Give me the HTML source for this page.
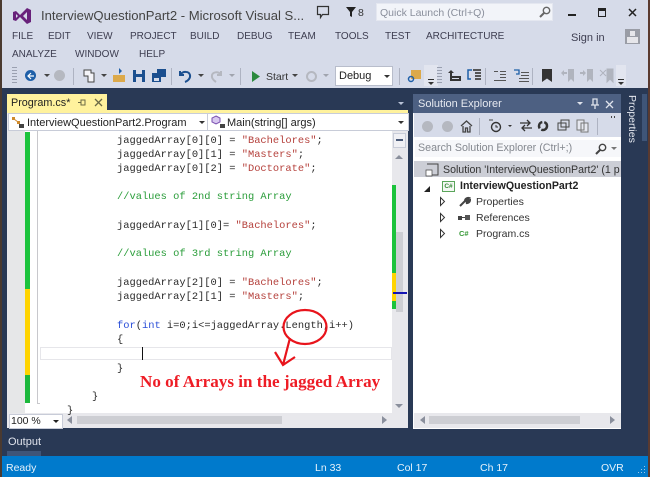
<!DOCTYPE html>
<html><head><meta charset="utf-8"><style>
html,body{margin:0;padding:0}
body{width:650px;height:477px;overflow:hidden;position:relative;background:#d6dbe9;font-family:"Liberation Sans",sans-serif;color:#3d3d50}
.a{position:absolute}
.t{position:absolute;white-space:nowrap;font-size:10.5px;line-height:14px}
.m{position:absolute;white-space:nowrap;font-size:10px;line-height:14px;top:30px}
.c{position:absolute;left:117px;white-space:pre;font:10.4px/14px "Liberation Mono",monospace;color:#2a2a2a}
.g{color:#2a9d3a}.s{color:#b5413c}.b{color:#2b4fd8}
svg{position:absolute;overflow:visible}
</style></head><body>
<div class="a" style="left:0;top:0;width:2px;height:477px;background:#4a3a30"></div>
<div class="a" style="left:648px;top:0;width:2px;height:477px;background:#5a3a30"></div>

<svg style="left:12px;top:7px" width="20" height="18" viewBox="0 0 20 18"><path d="M1 5l3-1 4 4 7-7 4 2v12l-4 2-7-7-4 4-3-1zM4 7v4l2-2zM15 5l-4 4 4 4z" fill="#68217a" fill-rule="evenodd"/></svg>
<div class="t" style="left:41px;top:8px;font-size:13.1px;line-height:16px;color:#444">InterviewQuestionPart2 - Microsoft Visual S...</div>
<svg style="left:316px;top:5px" width="14" height="14"><path d="M1.500 1.500h11v8h-6l-2 3v-3h-3z" fill="none" stroke="#333" stroke-width="1.200"/></svg>
<svg style="left:346px;top:7px" width="11" height="11"><path d="M0 0h10l-4 5v5l-2-1v-4z" fill="#222"/></svg>
<div class="t" style="left:358px;top:6px;color:#333">8</div>
<div class="a" style="left:376px;top:3px;width:175px;height:16px;background:#f2f4f9;border:1px solid #e4e7f0"></div>
<div class="t" style="left:380px;top:6px;color:#8a8f9c">Quick Launch (Ctrl+Q)</div>
<svg style="left:539px;top:6px" width="12" height="12"><circle cx="7.500" cy="4.500" r="3.200" fill="none" stroke="#666" stroke-width="1.400"/><path d="M5 7l-4 4" stroke="#666" stroke-width="2"/></svg>
<div class="a" style="left:568px;top:14px;width:8px;height:2px;background:#222"></div>
<div class="a" style="left:598px;top:8px;width:6px;height:5px;border:1.500px solid #222;border-top-width:3px"></div>
<svg style="left:628px;top:8px" width="10" height="9"><path d="M1 1l7 7M8 1l-7 7" stroke="#222" stroke-width="1.500"/></svg>

<div class="m" style="left:12px">FILE</div>
<div class="m" style="left:48px">EDIT</div>
<div class="m" style="left:87px">VIEW</div>
<div class="m" style="left:130px">PROJECT</div>
<div class="m" style="left:190px">BUILD</div>
<div class="m" style="left:237px">DEBUG</div>
<div class="m" style="left:288px">TEAM</div>
<div class="m" style="left:335px">TOOLS</div>
<div class="m" style="left:385px">TEST</div>
<div class="m" style="left:426px">ARCHITECTURE</div>
<div class="t" style="left:571px;top:31px;font-size:11px">Sign in</div>
<div class="a" style="left:625px;top:29px;width:15px;height:15px;background:#9a9da6"></div>
<div class="a" style="left:630px;top:31px;width:5px;height:5px;background:#e6e6ea"></div>
<div class="a" style="left:627px;top:37px;width:11px;height:6px;background:#e6e6ea"></div>
<div class="m" style="left:12px;top:48px">ANALYZE</div>
<div class="m" style="left:75px;top:48px">WINDOW</div>
<div class="m" style="left:139px;top:48px">HELP</div>

<!-- toolbar -->
<div class="a" style="left:12px;top:67px;width:5px;height:17px;background:repeating-linear-gradient(#9aa0b0 0 1px,#d6dbe9 1px 3px)"></div>
<div class="a" style="left:25px;top:70px;width:11px;height:11px;border-radius:50%;background:#1e5fa8"></div>
<svg style="left:27px;top:72px" width="8" height="8"><path d="M4 1L1 4l3 3M1 4h6" stroke="#fff" stroke-width="1.200" fill="none"/></svg>
<div class="a" style="left:44px;top:74px;border:3px solid transparent;border-top-color:#444"></div>
<div class="a" style="left:54px;top:70px;width:11px;height:11px;border-radius:50%;background:#b5b8c0"></div>
<div class="a" style="left:73px;top:68px;width:1px;height:17px;background:#aeb3c2"></div>
<svg style="left:82px;top:68px" width="14" height="16"><path d="M2 2h7v3h3v9H6V8H2z" fill="#f4f4f8" stroke="#444"/></svg>
<div class="a" style="left:101px;top:74px;border:3px solid transparent;border-top-color:#444"></div>
<svg style="left:112px;top:67px" width="14" height="16"><path d="M1 8h12v7H1z" fill="#dca94a"/><path d="M7 1l3 3-3 3z" fill="#1e5fa8"/></svg>
<svg style="left:133px;top:70px" width="12" height="12"><path d="M0 0h12v12H0z" fill="#1b4f8f"/><path d="M3 0h6v4H3zM3 7h6v5H3z" fill="#d6dbe9"/></svg>
<svg style="left:152px;top:69px" width="14" height="13"><path d="M5 0h9v8H5z" fill="#1b4f8f"/><path d="M0 4h9v9H0z" fill="#1b4f8f"/><path d="M2 9h5v3H2z" fill="#d6dbe9"/></svg>
<div class="a" style="left:171px;top:68px;width:1px;height:17px;background:#aeb3c2"></div>
<svg style="left:178px;top:69px" width="14" height="14"><path d="M2 2v4h4M2.500 5.500C5 2 11 2 12 6c.7 3-2 6-5 7" fill="none" stroke="#1b4f8f" stroke-width="2"/></svg>
<div class="a" style="left:198px;top:74px;border:3px solid transparent;border-top-color:#444"></div>
<svg style="left:210px;top:69px" width="13" height="14"><path d="M11 2v4H7M11 5.500C8 2 3 3 2 6c-.7 3 1 5 4 7" fill="none" stroke="#b5b8c0" stroke-width="2"/></svg>
<div class="a" style="left:229px;top:74px;border:3px solid transparent;border-top-color:#a0a4ae"></div>
<div class="a" style="left:240px;top:68px;width:1px;height:17px;background:#aeb3c2"></div>
<svg style="left:252px;top:71px" width="9" height="11"><path d="M0 0l8 5.500-8 5.500z" fill="#2b8a3e"/></svg>
<div class="t" style="left:266px;top:70px;color:#333">Start</div>
<div class="a" style="left:292px;top:74px;border:3px solid transparent;border-top-color:#444"></div>
<div class="a" style="left:306px;top:71px;width:7px;height:7px;border:2px solid #b5b8c0;border-radius:50%"></div>
<div class="a" style="left:323px;top:74px;border:3px solid transparent;border-top-color:#a0a4ae"></div>
<div class="a" style="left:335px;top:66px;width:56px;height:18px;background:#fff;border:1px solid #b8bdcb"></div>
<div class="t" style="left:339px;top:69px;color:#222;font-size:11px">Debug</div>
<div class="a" style="left:384px;top:75px;border:3px solid transparent;border-top-color:#333"></div>
<div class="a" style="left:399px;top:68px;width:1px;height:17px;background:#aeb3c2"></div>
<svg style="left:407px;top:69px" width="15" height="15"><path d="M4 1h10v9H4z" fill="#dca94a"/><circle cx="4" cy="10" r="2.500" fill="none" stroke="#1e5fa8" stroke-width="1.500"/></svg>
<div class="a" style="left:424px;top:65px;width:14px;height:21px;background:#e2e5ef"></div>
<div class="a" style="left:428px;top:79px;width:6px;height:1px;background:#333"></div>
<div class="a" style="left:428px;top:82px;border:3px solid transparent;border-top-color:#333"></div>
<div class="a" style="left:437px;top:67px;width:5px;height:17px;background:repeating-linear-gradient(#9aa0b0 0 1px,#d6dbe9 1px 3px)"></div>
<svg style="left:448px;top:70px" width="14" height="12"><path d="M3 0l3 3H4v3h9v5H2V3H0z" fill="#333"/><path d="M4 8h7v1H4z" fill="#d6dbe9"/></svg>
<svg style="left:467px;top:69px" width="15" height="13"><path d="M5 1H1v9h3" fill="none" stroke="#1e5fa8" stroke-width="1.500"/><path d="M6 0h8v2H6zM8 3h6v2H8zM8 6h6v2H8zM8 9h6v2H8z" fill="#555"/></svg>
<div class="a" style="left:485px;top:68px;width:1px;height:17px;background:#aeb3c2"></div>
<svg style="left:494px;top:71px" width="12" height="10"><path d="M0 0h4v1H0zM6 0h6v1H6zM6 3h6v1H6zM6 6h6v1H6zM0 9h12v1H0z" fill="#555"/></svg>
<svg style="left:514px;top:70px" width="15" height="12"><path d="M0 0h5v4H2" fill="none" stroke="#1e5fa8" stroke-width="1.300"/><path d="M7 2h8v1H7zM7 5h8v1H7zM5 8h10v1H5zM5 11h10v1H5z" fill="#555"/></svg>
<div class="a" style="left:532px;top:68px;width:1px;height:17px;background:#aeb3c2"></div>
<svg style="left:542px;top:69px" width="10" height="13"><path d="M0 0h10v13L5 9.500 0 13z" fill="#333"/></svg>
<svg style="left:561px;top:69px" width="14" height="13"><path d="M7 0h6v13l-3-3-3 3zM0 4l3-3v2h3v2H3v2z" fill="#b0b4be"/></svg>
<svg style="left:580px;top:69px" width="14" height="13"><path d="M7 0h6v13l-3-3-3 3zM6 4L3 1v2H0v2h3v2z" fill="#b0b4be"/></svg>
<svg style="left:600px;top:69px" width="14" height="13"><path d="M7 0h6v13l-3-3-3 3zM0 1l6 6M6 1L0 7" fill="#b0b4be" stroke="#b0b4be"/></svg>
<div class="a" style="left:616px;top:65px;width:10px;height:21px;background:#e2e5ef"></div>
<div class="a" style="left:618px;top:79px;width:6px;height:1px;background:#333"></div>
<div class="a" style="left:618px;top:82px;border:3px solid transparent;border-top-color:#333"></div>

<!-- dark body -->
<div class="a" style="left:2px;top:88px;width:646px;height:369px;background:#293955"></div>
<div class="a" style="left:7px;top:94px;width:100px;height:17px;background:#fff29d"></div>
<div class="a" style="left:7px;top:110px;width:401px;height:3px;background:#fff29d"></div>
<div class="t" style="left:11px;top:96px;font-size:10.800px;color:#222">Program.cs*</div>
<svg style="left:78px;top:99px" width="9" height="7"><path d="M0 3.500h3M3 1h4v5H3z" fill="none" stroke="#6b6a45"/></svg>
<svg style="left:94px;top:98px" width="9" height="9"><path d="M1 1l7 7M8 1l-7 7" stroke="#6b6a45" stroke-width="1.300"/></svg>
<div class="a" style="left:398px;top:102px;border:3.500px solid transparent;border-top-color:#b8c2d6"></div>

<!-- editor -->
<div class="a" style="left:7px;top:113px;width:401px;height:315px;background:#e8e8ec"></div>
<div class="a" style="left:8px;top:113px;width:198px;height:16px;background:#fff;border:1px solid #c8ccd8"></div>
<div class="a" style="left:207px;top:113px;width:200px;height:16px;background:#fff;border:1px solid #c8ccd8"></div>
<svg style="left:11px;top:115px" width="14" height="14"><path d="M1 2h3v3H1zM6 6h3v3H6z" fill="#d08a2c"/><path d="M3 4l4 3" stroke="#d08a2c"/><rect x="8" y="9" width="5" height="4" fill="#444"/></svg>
<div class="t" style="left:27px;top:116px;font-size:11px;color:#222">InterviewQuestionPart2.Program</div>
<div class="a" style="left:199px;top:121px;border:3px solid transparent;border-top-color:#333"></div>
<svg style="left:211px;top:115px" width="15" height="14"><path d="M5 1l4 2v4l-4 2-4-2V3z" fill="#d8c8f0" stroke="#7a4fb0"/><rect x="9" y="9" width="5" height="4" fill="#444"/></svg>
<div class="t" style="left:227px;top:116px;font-size:11px;color:#222">Main(string[] args)</div>
<div class="a" style="left:398px;top:121px;border:3px solid transparent;border-top-color:#333"></div>

<div class="a" style="left:23px;top:131px;width:369px;height:282px;background:#fff"></div>
<div class="a" style="left:8px;top:131px;width:17px;height:282px;background:#e6e7e8"></div>
<div class="a" style="left:25px;top:132px;width:5px;height:157px;background:#1cc33c"></div>
<div class="a" style="left:25px;top:289px;width:5px;height:86px;background:#ffd400"></div>
<div class="a" style="left:25px;top:375px;width:5px;height:28px;background:#1cb83c"></div>
<div class="a" style="left:37px;top:131px;width:1px;height:272px;background:#c8c8cc"></div>
<div class="a" style="left:37px;top:403px;width:3px;height:1px;background:#c8c8cc"></div>
<div class="a" style="left:40px;top:347px;width:350px;height:11px;border:1px solid #e6e6ea;background:#fff"></div>
<div class="a" style="left:142px;top:347px;width:1px;height:13px;background:#111"></div>

<div class="c" style="top:134px">jaggedArray[0][0] = <span class="s">"Bachelores"</span>;</div>
<div class="c" style="top:148px">jaggedArray[0][1] = <span class="s">"Masters"</span>;</div>
<div class="c" style="top:162px">jaggedArray[0][2] = <span class="s">"Doctorate"</span>;</div>
<div class="c g" style="top:190px">//values of 2nd string Array</div>
<div class="c" style="top:219px">jaggedArray[1][0]= <span class="s">"Bachelores"</span>;</div>
<div class="c g" style="top:247px">//values of 3rd string Array</div>
<div class="c" style="top:276px">jaggedArray[2][0] = <span class="s">"Bachelores"</span>;</div>
<div class="c" style="top:290px">jaggedArray[2][1] = <span class="s">"Masters"</span>;</div>
<div class="c" style="top:319px"><span class="b">for</span>(<span class="b">int</span> i=0;i&lt;=jaggedArray.Length;i++)</div>
<div class="c" style="top:333px">{</div>
<div class="c" style="top:362px">}</div>
<div class="c" style="top:390px;left:92px">}</div>
<div class="c" style="top:404px;left:67px">}</div>

<svg style="left:270px;top:305px" width="70" height="70" fill="none" stroke="#e8141c" stroke-width="2.200"><ellipse cx="35" cy="22" rx="21.500" ry="17"/><path d="M20 33L13 60M5 47l8 13 12-8"/></svg>
<div class="t" style="left:140px;top:373px;font:bold 17.100px/18px 'Liberation Serif',serif;color:#ee1c25">No of Arrays in the jagged Array</div>

<!-- editor scrollbar -->
<div class="a" style="left:392px;top:131px;width:15px;height:282px;background:#e8e8ec"></div>
<div class="a" style="left:393px;top:133px;width:13px;height:15px;background:#f0f0f4;border:1px solid #c8ccd8;box-sizing:border-box"></div>
<div class="a" style="left:396px;top:139px;width:7px;height:2px;background:#4a5a78"></div>
<div class="a" style="left:395px;top:151px;border:4px solid transparent;border-bottom-color:#8a8f9c"></div>
<div class="a" style="left:395px;top:404px;border:4px solid transparent;border-top-color:#8a8f9c"></div>
<div class="a" style="left:396px;top:232px;width:7px;height:80px;background:#cdced3"></div>
<div class="a" style="left:392px;top:185px;width:4px;height:124px;background:#1cc33c"></div>
<div class="a" style="left:392px;top:273px;width:4px;height:28px;background:#ffd400"></div>
<div class="a" style="left:393px;top:292px;width:14px;height:2px;background:#1414b4"></div>

<div class="a" style="left:9px;top:414px;width:52px;height:13px;background:#fff;border:1px solid #c8ccd8"></div>
<div class="t" style="left:11px;top:414px;color:#222">100 %</div>
<div class="a" style="left:53px;top:420px;border:3px solid transparent;border-top-color:#222"></div>
<div class="a" style="left:67px;top:416px;border:4px solid transparent;border-left:0;border-right:5px solid #8a8f9c"></div>
<div class="a" style="left:77px;top:416px;width:205px;height:8px;background:#cdced3"></div>
<div class="a" style="left:382px;top:416px;border:4px solid transparent;border-right:0;border-left:5px solid #8a8f9c"></div>

<!-- solution explorer -->
<div class="a" style="left:413px;top:94px;width:208px;height:335px;background:#fff"></div>
<div class="a" style="left:413px;top:94px;width:208px;height:19px;background:#4d6082"></div>
<div class="t" style="left:418px;top:97px;font-size:11px;color:#e6e9f0">Solution Explorer</div>
<div class="a" style="left:577px;top:102px;border:3.500px solid transparent;border-top-color:#dfe3ec"></div>
<svg style="left:591px;top:98px" width="9" height="12"><path d="M2 1h4v6H2zM0 7h8M4 7v4" fill="none" stroke="#dfe3ec" stroke-width="1.300"/></svg>
<svg style="left:605px;top:100px" width="9" height="9"><path d="M1 1l7 7M8 1l-7 7" stroke="#dfe3ec" stroke-width="1.300"/></svg>
<div class="a" style="left:414px;top:113px;width:207px;height:24px;background:#d6dbe9"></div>
<div class="a" style="left:422px;top:121px;width:11px;height:11px;border-radius:50%;background:#b5b8c0"></div>
<div class="a" style="left:442px;top:121px;width:11px;height:11px;border-radius:50%;background:#b5b8c0"></div>
<svg style="left:460px;top:120px" width="13" height="13"><path d="M1 6l5.500-5L12 6M3 6v6h2.500V8h2v4H10V6" fill="none" stroke="#444" stroke-width="1.300"/></svg>
<div class="a" style="left:479px;top:118px;width:1px;height:17px;background:#aeb3c2"></div>
<svg style="left:489px;top:119px" width="13" height="14"><path d="M0 1h4" stroke="#444"/><circle cx="7" cy="8" r="4.500" fill="none" stroke="#333" stroke-width="1.400"/><path d="M7 6v2h2" stroke="#333" fill="none"/></svg>
<div class="a" style="left:508px;top:125px;border:2.500px solid transparent;border-top-color:#333"></div>
<svg style="left:520px;top:120px" width="12" height="11"><path d="M0 3h9M7 0l3 3-3 3M12 8H3M5 5L2 8l3 3" fill="none" stroke="#333" stroke-width="1.300"/></svg>
<svg style="left:537px;top:120px" width="12" height="12"><circle cx="6" cy="6" r="4" fill="none" stroke="#333" stroke-width="2.500" stroke-dasharray="8 2"/></svg>
<svg style="left:558px;top:119px" width="12" height="12"><path d="M3 1h8v7H3zM0 4h8v7H0z" fill="#d6dbe9" stroke="#444"/></svg>
<svg style="left:577px;top:119px" width="12" height="14"><path d="M0 1h7v10H0zM4 4h7v9H4z" fill="#e6e8f0" stroke="#777"/></svg>
<div class="a" style="left:597px;top:118px;width:1px;height:17px;background:#aeb3c2"></div>
<div class="a" style="left:611px;top:116px;width:1px;height:2px;background:#444;box-shadow:3px 0 #444"></div>
<div class="a" style="left:415px;top:140px;width:206px;height:17px;background:#f6f7fa"></div>
<div class="t" style="left:418px;top:141px;color:#84888f;font-size:10.700px">Search Solution Explorer (Ctrl+;)</div>
<svg style="left:595px;top:143px" width="12" height="12"><circle cx="7.500" cy="4.500" r="3.200" fill="none" stroke="#444" stroke-width="1.400"/><path d="M5 7l-4 4" stroke="#444" stroke-width="2"/></svg>
<div class="a" style="left:611px;top:147px;border:3px solid transparent;border-top-color:#777"></div>
<div class="a" style="left:414px;top:161px;width:207px;height:16px;background:#ccced6"></div>
<svg style="left:425px;top:163px" width="14" height="14"><path d="M2 1h11v11H5" fill="none" stroke="#444"/><path d="M1 7h6v6H1z" fill="#fff" stroke="#444" stroke-width=".7"/></svg>
<div class="a" style="left:443px;top:163px;width:178px;height:14px;overflow:hidden"><div class="t" style="left:0;top:0;color:#333;font-size:10.600px">Solution 'InterviewQuestionPart2' (1 p</div></div>
<div class="a" style="left:424px;top:186px;width:0;height:0;border-bottom:6px solid #222;border-left:6px solid transparent"></div>
<div class="a" style="left:442px;top:181px;width:11px;height:9px;border:1px solid #5aa55a;background:#f4f8f4;font:bold 6.500px/9px 'Liberation Sans',sans-serif;color:#3a8a3a;text-align:center">C#</div>
<div class="t" style="left:460px;top:179px;font-weight:bold;color:#222;font-size:10.600px">InterviewQuestionPart2</div>
<svg style="left:440px;top:197px" width="6" height="9"><path d="M.5.5l4 4-4 4z" fill="#fff" stroke="#333"/></svg>
<svg style="left:440px;top:213px" width="6" height="9"><path d="M.5.5l4 4-4 4z" fill="#fff" stroke="#333"/></svg>
<svg style="left:440px;top:229px" width="6" height="9"><path d="M.5.5l4 4-4 4z" fill="#fff" stroke="#333"/></svg>
<svg style="left:459px;top:197px" width="11" height="10"><path d="M1 9l5-5M6 4c0-2 2-3.500 4-3L8 3l1 1 2-1c0 2-2 3.500-4 3" stroke="#444" stroke-width="2" fill="#444"/></svg>
<div class="a" style="left:458px;top:216px;width:4px;height:4px;background:#444"></div>
<div class="a" style="left:462px;top:217px;width:3px;height:1px;background:#444"></div>
<div class="a" style="left:465px;top:215px;width:5px;height:5px;background:#555"></div>
<div class="t" style="left:459px;top:227px;font:bold 7.500px/14px 'Liberation Sans',sans-serif;color:#3a9a3a">C#</div>
<div class="t" style="left:476px;top:195px;color:#333">Properties</div>
<div class="t" style="left:476px;top:211px;color:#333">References</div>
<div class="t" style="left:476px;top:227px;color:#333">Program.cs</div>
<div class="a" style="left:414px;top:413px;width:207px;height:15px;background:#e8e8ec"></div>
<div class="a" style="left:420px;top:416px;border:4px solid transparent;border-left:0;border-right:5px solid #8a8f9c"></div>
<div class="a" style="left:429px;top:416px;width:151px;height:8px;background:#cdced3"></div>
<div class="a" style="left:610px;top:416px;border:4px solid transparent;border-right:0;border-left:5px solid #8a8f9c"></div>

<!-- properties -->
<div class="a" style="left:642px;top:94px;width:5px;height:47px;background:#3f5578"></div>
<div class="t" style="left:626px;top:95px;color:#e6e9f0;writing-mode:vertical-rl;line-height:12px">Properties</div>

<!-- output -->
<div class="t" style="left:8px;top:435px;font-size:11px;color:#dfe3ec">Output</div>
<div class="a" style="left:7px;top:451px;width:34px;height:6px;background:#3f5578"></div>

<!-- status -->
<div class="a" style="left:2px;top:456px;width:646px;height:21px;background:#007acc"></div>
<div class="t" style="left:6px;top:461px;font-size:10.500px;color:#e8f2fa">Ready</div>
<div class="t" style="left:315px;top:461px;color:#e8f2fa">Ln 33</div>
<div class="t" style="left:397px;top:461px;color:#e8f2fa">Col 17</div>
<div class="t" style="left:480px;top:461px;color:#e8f2fa">Ch 17</div>
<div class="t" style="left:601px;top:461px;color:#e8f2fa">OVR</div>
<div class="a" style="left:641px;top:472px;width:1px;height:1px;background:#a0c8e8;box-shadow:3px 0 #a0c8e8,3px -3px #a0c8e8,0 -3px #a0c8e8,-3px 0 #a0c8e8,3px -6px #a0c8e8"></div>
</body></html>
